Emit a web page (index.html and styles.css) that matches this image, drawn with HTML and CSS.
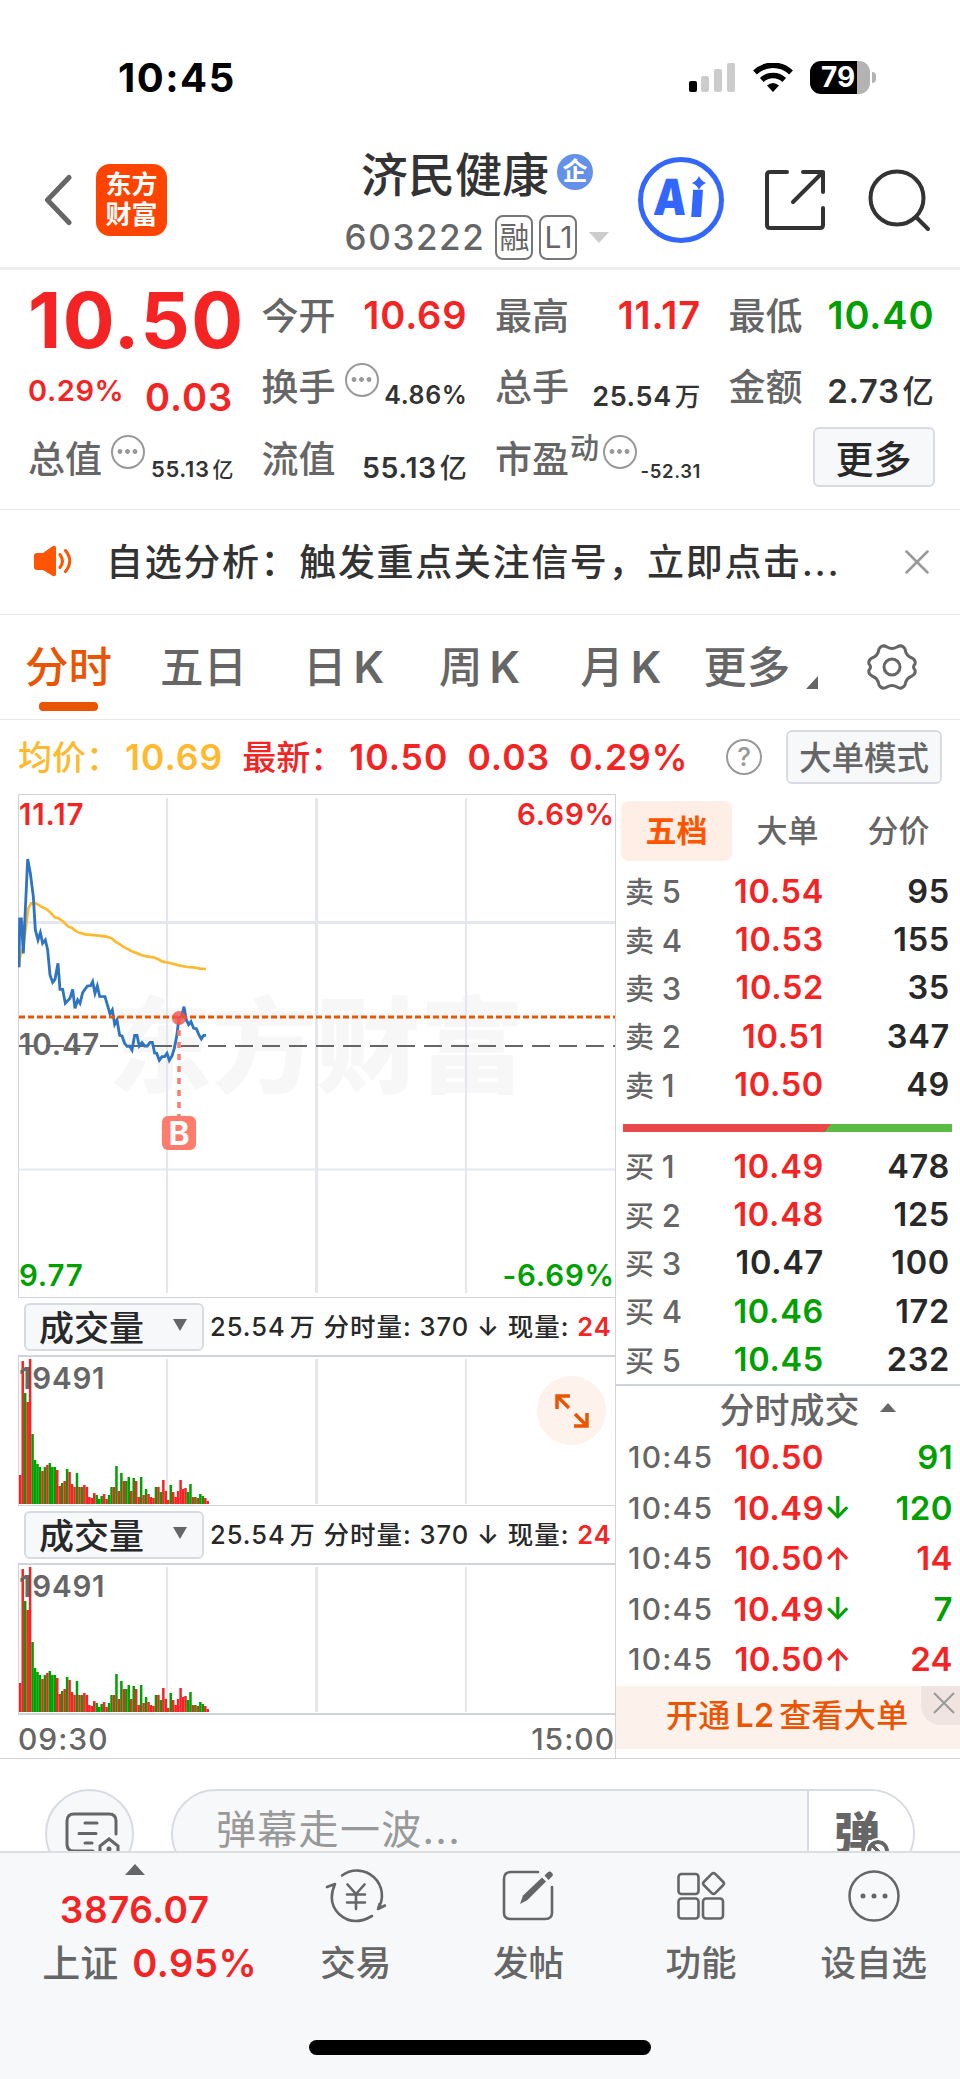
FILE: index.html
```html
<!DOCTYPE html>
<html lang="zh-CN">
<head>
    <meta charset="UTF-8">
    <meta name="viewport" content="width=device-width, initial-scale=1.0">
    <title>济民健康 603222</title>
    <link rel="stylesheet" href="styles.css">
</head>
<body>
    <!-- 状态栏 -->
    <div class="status-bar">
        <span class="clock">10:45</span>
        <div class="status-icons">
            <svg class="signal" width="46" height="30" viewBox="0 0 46 30">
                <rect x="0" y="18" width="8" height="11" rx="2" fill="#000"/>
                <rect x="12" y="13" width="8" height="16" rx="2" fill="#ccc"/>
                <rect x="25" y="6" width="8" height="23" rx="2" fill="#ccc"/>
                <rect x="38" y="0" width="8" height="29" rx="2" fill="#ccc"/>
            </svg>
            <svg class="wifi" width="40" height="30" viewBox="0 0 40 30" fill="none" stroke="#000">
                <path d="M2 9.5 A26 26 0 0 1 38 9.5" stroke-width="5.5"/>
                <path d="M8.8 17 A16.5 16.5 0 0 1 31.200 17" stroke-width="5.5"/>
                <path d="M14 22.500 Q20 17.500 26 22.500 L20 29 Z" fill="#000" stroke="none"/>
            </svg>
            <div class="battery"><span>79</span></div>
            <i class="battery-tip"></i>
        </div>
    </div>

    <!-- 顶部标题 -->
    <header class="top">
        <svg class="back" width="28" height="52" viewBox="0 0 28 52" fill="none" stroke="#666" stroke-width="5" stroke-linecap="round" stroke-linejoin="round">
            <path d="M25 3.500 L3.500 26 L25 48.500"/>
        </svg>
        <div class="logo">东方<br>财富</div>
        <div class="stock">
            <div class="stock-name">济民健康<span class="badge">企</span></div>
            <div class="stock-code"><span class="code">603222</span><span class="tag">融</span><span class="tag">L1</span><i class="caret"></i></div>
        </div>
        <svg class="ai" width="88" height="88" viewBox="0 0 88 88">
            <circle cx="44" cy="44" r="40.500" fill="none" stroke="#36f" stroke-width="5"/>
            <text x="20" y="59" textLength="33" lengthAdjust="spacingAndGlyphs" transform="skewX(-4)">A</text>
            <text x="56" y="61" transform="skewX(-4)">ı</text>
            <path d="M62 20 Q64 25 69 27 Q64 29 62 34 Q60 29 55 27 Q60 25 62 20Z" fill="#36f"/>
        </svg>
        <svg class="share" width="62" height="62" viewBox="0 0 62 62" fill="none" stroke="#333" stroke-width="4" stroke-linecap="round" stroke-linejoin="round">
            <path d="M23 3 H6 Q3 3 3 6 V56 Q3 59 6 59 H56 Q59 59 59 56 V39"/>
            <path d="M39 3 H59 V23 M58 4 L29 33"/>
        </svg>
        <svg class="search" width="64" height="64" viewBox="0 0 64 64" fill="none" stroke="#333" stroke-width="4" stroke-linecap="round">
            <circle cx="30" cy="30" r="26.500"/>
            <path d="M49 49 L61 61"/>
        </svg>
    </header>

    <!-- 行情数据 -->
    <section class="quote">
        <div class="cell"><b class="price red">10.50</b></div>
        <div class="cell"><span>今开</span><em class="n37 red">10.69</em></div>
        <div class="cell"><span>最高</span><em class="n37 red">11.17</em></div>
        <div class="cell"><span>最低</span><em class="n37 green">10.40</em></div>

        <div class="cell change"><em class="n29 red">0.29%</em><em class="n37 low red">0.03</em></div>
        <div class="cell"><span>换手</span><i class="dots"></i><em class="n25">4.86%</em></div>
        <div class="cell"><span>总手</span><em class="n27">25.54<small>万</small></em></div>
        <div class="cell"><span>金额</span><em class="n32">2.73<small>亿</small></em></div>

        <div class="cell"><span>总值</span><i class="dots"></i><em class="n22">55.13<small>亿</small></em></div>
        <div class="cell"><span>流值</span><em class="n28">55.13<small>亿</small></em></div>
        <div class="cell"><span>市盈</span><sup>动</sup><i class="dots tight"></i><em class="n18">-52.31</em></div>
        <div class="cell right"><button class="more">更多</button></div>
    </section>

    <!-- 公告 -->
    <section class="notice">
        <svg width="40" height="34" viewBox="0 0 40 34">
            <path d="M3 8 H9 L19 1 Q22 0 22 3 V29 Q22 32 19 31 L9 25 H3 Q0 25 0 22 V11 Q0 8 3 8Z" fill="#ff5500"/>
            <path d="M26 9.500 Q31 16 26 22.500 M31.500 5.500 Q40 16 31.500 26.500" fill="none" stroke="#ff5500" stroke-width="3" stroke-linecap="round"/>
        </svg>
        <p>自选分析：触发重点关注信号，立即点击...</p>
        <svg class="close" width="24" height="24" viewBox="0 0 24 24" stroke="#999" stroke-width="2.500" stroke-linecap="round">
            <path d="M1.500 1.500 L22.500 22.500 M22.500 1.500 L1.500 22.500"/>
        </svg>
    </section>

    <!-- 周期切换 -->
    <nav class="tabs">
        <a class="active">分时</a>
        <a>五日</a>
        <a>日<span>K</span></a>
        <a>周<span>K</span></a>
        <a>月<span>K</span></a>
        <a class="drop">更多</a>
        <svg class="gear" width="50" height="48" viewBox="0 0 50 48" fill="none" stroke="#666" stroke-width="3" stroke-linejoin="round">
            <path d="M20 4 Q25 7 30 4 Q35 1 38 6 Q39 13 45 15 Q49 17 48 21 Q45 24 48 27 Q49 31 45 33 Q39 35 38 42 Q35 47 30 44 Q25 41 20 44 Q15 47 12 42 Q11 35 5 33 Q1 31 2 27 Q5 24 2 21 Q1 17 5 15 Q11 13 12 6 Q15 1 20 4Z"/>
            <circle cx="25" cy="24" r="8"/>
        </svg>
    </nav>

    <div class="summary">
        <span class="avg">均价：<em>10.69</em></span>
        <span class="last red">最新：<em>10.50</em><em>0.03</em><em>0.29%</em></span>
        <span class="help">?</span>
        <button class="mode">大单模式</button>
    </div>

    <main class="board">
        <!-- 分时图 -->
        <div class="charts">
            <div class="chart">
                <div class="watermark">东方财富</div>
                <svg class="plot" width="597" height="503" viewBox="0 0 597 503">
                    <g stroke="#e4e7ee" stroke-width="2">
                        <path d="M149 4 V499 M448 4 V499 M0 375.500 H597"/>
                        <path d="M298.500 4 V499 M0 128.500 H597" stroke-width="3"/>
                    </g>
                    <path d="M1 252 H597" stroke="#666" stroke-width="2" stroke-dasharray="18 9"/>
                    <!-- 均价线 -->
                    <polyline transform="translate(-18 -4) scale(.3333)" fill="none" stroke="#ffb92e" stroke-width="8" points="57,532 60,500 70,470 78,410 85,355 93,340 108,340 124,350 140,358 152,368 165,382 175,385 188,393 205,410 215,413 230,425 255,433 290,436 320,440 335,445 345,454 375,473 400,486 410,489 425,496 440,499 460,502 473,507 488,515 510,519 540,527 562,531 580,532 600,536 618,537"/>
                    <!-- 价格线 -->
                    <polyline transform="translate(-18 -4) scale(.3333)" fill="none" stroke="#2f74c0" stroke-width="8.500" points="57,532 59,387 64,387 70,490 83,207 91,250 100,320 106,420 114,450 121,428 128,460 136,450 143,480 150,555 158,577 165,568 174,520 180,598 188,598 196,640 210,625 218,598 225,655 233,630 240,640 248,608 262,588 272,587 278,575 285,610 292,588 299,619 315,620 330,672 337,660 344,703 351,690 359,736 366,738 374,760 381,769 389,768 396,780 404,736 411,736 418,768 426,758 434,768 442,768 450,757 457,757 464,789 470,790 478,811 486,800 494,800 501,790 508,811 516,798 523,775 530,740 537,684 545,680 552,650 559,690 566,704 573,695 581,715 589,716 597,735 604,747 611,736 618,736"/>
                    <path d="M1 223 H597" stroke="#ea5504" stroke-width="3" stroke-dasharray="6 3"/>
                    <path d="M161 224 V322" stroke="#ff7b6b" stroke-width="3.500" stroke-dasharray="6 6"/>
                    <circle cx="161" cy="224" r="7" fill="#f0504a" fill-opacity=".8"/>
                </svg>
                <span class="buy-mark">B</span>
                <span class="lbl tl red">11.17</span>
                <span class="lbl tr red">6.69%</span>
                <span class="lbl mid">10.47</span>
                <span class="lbl bl green">9.77</span>
                <span class="lbl br green">-6.69%</span>
            </div>

            <div class="vol-head">
                <button class="pick">成交量<i></i></button>
                <span class="vol-info">25.54<small>万</small> 分时量: 370 ↓ 现量: <b class="red">24</b></span>
            </div>
            <div class="volume">
                <svg class="bars" width="597" height="150" viewBox="0 0 597 150"></svg>
                <span class="lbl vol-max">19491</span>
                <div class="expand">
                    <svg width="36" height="36" viewBox="0 0 36 36" fill="none" stroke="#ea5504" stroke-width="3.500">
                        <path d="M3 16 V3 H16 M3.500 3.500 L15 15 M33 20 V33 H20 M32.500 32.500 L21 21"/>
                    </svg>
                </div>
            </div>

            <div class="vol-head">
                <button class="pick">成交量<i></i></button>
                <span class="vol-info">25.54<small>万</small> 分时量: 370 ↓ 现量: <b class="red">24</b></span>
            </div>
            <div class="volume last-vol">
                <svg class="bars" width="597" height="150" viewBox="0 0 597 150"></svg>
                <span class="lbl vol-max">19491</span>
            </div>
            <div class="times"><span>09:30</span><span>15:00</span></div>
        </div>

        <!-- 五档盘口 -->
        <aside class="side">
            <div class="side-tabs"><a class="on">五档</a><a>大单</a><a>分价</a></div>
            <ul class="book">
                <li><span>卖<i>5</i></span><em class="red">10.54</em><b>95</b></li>
                <li><span>卖<i>4</i></span><em class="red">10.53</em><b>155</b></li>
                <li><span>卖<i>3</i></span><em class="red">10.52</em><b>35</b></li>
                <li><span>卖<i>2</i></span><em class="red">10.51</em><b>347</b></li>
                <li><span>卖<i>1</i></span><em class="red">10.50</em><b>49</b></li>
            </ul>
            <div class="ratio"></div>
            <ul class="book">
                <li><span>买<i>1</i></span><em class="red">10.49</em><b>478</b></li>
                <li><span>买<i>2</i></span><em class="red">10.48</em><b>125</b></li>
                <li><span>买<i>3</i></span><em>10.47</em><b>100</b></li>
                <li><span>买<i>4</i></span><em class="green">10.46</em><b>172</b></li>
                <li><span>买<i>5</i></span><em class="green">10.45</em><b>232</b></li>
            </ul>
            <div class="deal-title">分时成交<i></i></div>
            <ul class="deals">
                <li><span>10:45</span><em class="red">10.50</em><u></u><b class="green">91</b></li>
                <li><span>10:45</span><em class="red">10.49</em><u class="green">↓</u><b class="green">120</b></li>
                <li><span>10:45</span><em class="red">10.50</em><u class="red">↑</u><b class="red">14</b></li>
                <li><span>10:45</span><em class="red">10.49</em><u class="green">↓</u><b class="green">7</b></li>
                <li><span>10:45</span><em class="red">10.50</em><u class="red">↑</u><b class="red">24</b></li>
            </ul>
            <div class="promo">
                开通<span>L2</span>查看大单
                <div class="promo-close">
                    <svg width="22" height="22" viewBox="0 0 22 22" stroke="#999" stroke-width="2"><path d="M1 1 L21 21 M21 1 L1 21"/></svg>
                </div>
            </div>
        </aside>
    </main>

    <!-- 弹幕 -->
    <section class="comment">
        <div class="comment-icon">
            <svg width="56" height="52" viewBox="0 0 56 52" fill="none" stroke="#666" stroke-width="3" stroke-linecap="round">
                <path d="M51 22 V9 Q51 2 44 2 H9 Q2 2 2 9 V32 Q2 39 9 39 H28 M20 11 H32 M14 21.500 H31 M20 31 H27"/>
                <path d="M35 42 V34 L44 27 L53 34 V42" />
                <circle cx="44" cy="37" r="2.500" fill="#666" stroke="none"/>
            </svg>
        </div>
        <div class="comment-box">
            <span class="placeholder">弹幕走一波...</span>
            <div class="toggle">弹<i></i></div>
        </div>
    </section>

    <!-- 底部导航 -->
    <footer class="bottom">
        <div class="index">
            <i></i>
            <em class="red">3876.07</em>
            <p>上证<em class="red">0.95%</em></p>
        </div>
        <a>
            <svg width="62" height="56" viewBox="0 0 62 56" fill="none" stroke="#666" stroke-width="2.600" stroke-linecap="round" stroke-linejoin="round">
                <path d="M17 7.500 A25 25 0 0 1 53 41 L60 37.500 M53 41 L54.500 36"/>
                <path d="M2 19 L10 16 Q2 34 14 46 Q28 59 47 48"/>
                <path d="M22.500 16.500 L31 26 L39.500 16.500 M31 26 V41 M22 26.500 H40 M22 34.500 H40"/>
            </svg>
            交易
        </a>
        <a>
            <svg width="54" height="56" viewBox="0 0 54 56" fill="none" stroke="#666" stroke-width="2.600" stroke-linecap="round">
                <path d="M37 4 H10 Q3 4 3 11 V45 Q3 51 10 51 H44 Q51 51 51 45 V19"/>
                <path d="M19 36 L22 27.500 L41 9.500 L45 13.500 L26.500 32 Z M43.500 7.500 L46.500 4.500 Q49 2.500 51 5 Q53 7 50.500 9 L47.500 12Z" fill="#666" stroke="none"/>
            </svg>
            发帖
        </a>
        <a>
            <svg width="50" height="56" viewBox="0 0 50 56" fill="none" stroke="#666" stroke-width="2.600">
                <rect x="2.500" y="6" width="20" height="20" rx="3"/>
                <rect x="2.500" y="30.500" width="20" height="20" rx="3"/>
                <rect x="27" y="30.500" width="20" height="20" rx="3"/>
                <rect x="29.500" y="7.500" width="16" height="16" rx="2.500" transform="rotate(45 37.500 15.500)"/>
            </svg>
            功能
        </a>
        <a>
            <svg width="54" height="56" viewBox="0 0 54 56" fill="#666">
                <circle cx="27" cy="28" r="24.500" fill="none" stroke="#666" stroke-width="2.500"/>
                <circle cx="16" cy="28" r="2.500"/><circle cx="27" cy="28" r="2.500"/><circle cx="38" cy="28" r="2.500"/>
            </svg>
            设自选
        </a>
        <div class="home-bar"></div>
    </footer>

    <script>
        // 每分钟成交量，r 红 g 绿
        const volumes = "r29 r143 g111 r102 r145 g70 g44 g40 g37 r33 g37 r39 g41 g37 g37 r34 r18 g21 r23 g35 r32 r20 r17 g31 r17 g17 r19 r17 r7 r6 r11 g9 g5 g8 r10 r5 g9 g17 r17 g38 r13 g31 r23 g23 g27 r13 g26 r23 r7 g27 r9 g15 r10 r7 r6 g17 r17 g12 r24 r13 r4 g19 r12 r7 r13 r24 r15 r16 g12 g20 r7 g7 r6 g10 g8 r6 r3".split(" ");

        document.querySelectorAll(".bars").forEach(svg => {
            let out = '<path d="M149 3 V148 M448 3 V148" stroke="#e4e7ee" stroke-width="2"/><path d="M298.500 3 V148" stroke="#e4e7ee" stroke-width="3"/>';
            volumes.forEach((v, i) => {
                const h = Number(v.slice(1));
                const x = 1 + i * 2.467;
                out += `<rect x="${x}" y="${148 - h}" width="2.5" height="${h}" fill="${v[0] === "r" ? "#f42424" : "#00a000"}"/>`;
            });
            svg.innerHTML = out;
        });
    </script>
</body>
</html>
```
FILE: styles.css
```css
* {
    box-sizing: border-box;
    margin: 0;
    padding: 0;
}

body {
    width: 960px;
    height: 2079px;
    overflow: hidden;
    background: #fff;
    color: #282828;
    font-family: Inter, "Noto Sans CJK SC", sans-serif;
    font-weight: 500;
}

em, i, u {
    font-style: normal;
    text-decoration: none;
}

em {
    font-weight: 600;
}

ul {
    list-style: none;
}

svg {
    display: block;
    flex: none;
}

button {
    font-family: inherit;
    font-weight: 500;
    background: #f7f8fa;
    border: 2px solid #d8dce2;
    border-radius: 6px;
}

.red { color: #f42424; }
.green { color: #00a000; }

/* 状态栏 */
.status-bar {
    height: 130px;
    padding: 61px 84px 0 118px;
    display: flex;
    justify-content: space-between;
    align-items: flex-start;
}

.clock {
    font-size: 40px;
    font-weight: 700;
    line-height: 34px;
    letter-spacing: 1.5px;
    color: #000;
}

.status-icons {
    display: flex;
    align-items: center;
    height: 33px;
}

.wifi {
    margin: 0 17px 0 18px;
}

.battery {
    width: 60px;
    height: 33px;
    border-radius: 11px;
    background: linear-gradient(to right, #000 47px, #b3b3b3 47px);
    color: #fff;
    font-size: 28px;
    font-weight: 700;
    line-height: 33px;
    padding-left: 11px;
}

.battery-tip {
    width: 4px;
    height: 11px;
    margin-left: 2px;
    border-radius: 0 6px 6px 0;
    background: #b3b3b3;
}

/* 顶部标题 */
.top {
    height: 140px;
    padding: 2px 0 0 44px;
    display: flex;
    align-items: center;
    border-bottom: 3px solid #ededed;
}

.logo {
    width: 71px;
    height: 72px;
    margin-left: 24px;
    padding-top: 6px;
    border-radius: 14px;
    background: #ff4400;
    color: #fff;
    font-size: 26px;
    font-weight: 700;
    line-height: 30px;
    text-align: center;
}

.stock {
    width: 300px;
    height: 117px;
    margin-left: 160px;
}

.stock-name {
    height: 61px;
    display: flex;
    align-items: center;
    justify-content: center;
    font-size: 47px;
    color: #333;
}

.badge {
    width: 36px;
    height: 36px;
    margin-left: 8px;
    border-radius: 50%;
    background: #6390e8;
    color: #fff;
    font-size: 25px;
    font-weight: 700;
    line-height: 35px;
    text-align: center;
}

.stock-code {
    height: 60px;
    margin-top: 5px;
    display: flex;
    align-items: center;
    justify-content: center;
    color: #666;
}

.code {
    font-size: 35px;
    letter-spacing: 1.600px;
}

.tag {
    height: 45px;
    min-width: 38px;
    margin-left: 6px;
    padding: 0 3px;
    border: 2px solid #777;
    border-radius: 8px;
    font-size: 30px;
    font-weight: 400;
    line-height: 41px;
    text-align: center;
}

.code + .tag {
    margin-left: 10px;
    padding: 0 2px;
}

.caret {
    margin-left: 12px;
    border: 10px solid transparent;
    border-top: 11px solid #ccc;
    border-bottom: 0;
}

.ai {
    margin-left: 10px;
}

.ai text {
    fill: #36f;
    font-size: 50px;
    font-weight: 900;
}

.share {
    margin-left: 39px;
}

.search {
    margin-left: 41px;
}

/* 行情数据 */
.quote {
    height: 240px;
    padding: 9px 26px 0 28px;
    display: grid;
    grid-template-columns: repeat(4, 206px);
    grid-auto-rows: 71.500px;
    column-gap: 27.500px;
    border-bottom: 1px solid #e8e8e8;
}

.cell {
    display: flex;
    align-items: center;
    white-space: nowrap;
    font-size: 37px;
    color: #666;
}

.cell > span {
    margin-top: -2px;
}

.cell em {
    margin-left: auto;
    color: #333;
    letter-spacing: .6px;
}

.cell em.red { color: #f42424; }
.cell em.green { color: #00a000; }

.cell .price {
    margin-top: 11px;
    font-size: 77px;
    font-weight: 700;
    letter-spacing: 1.500px;
}

.cell small {
    font-size: 95%;
    font-weight: 500;
    margin-left: 3px;
}

.cell .n37 { font-size: 38px; letter-spacing: .9px; padding-top: 1px; }
.n32 { font-size: 33px; padding-top: 7px; }
.n29 { font-size: 29px; }
.n28 { font-size: 28.500px; padding-top: 17px; }
.n27 { font-size: 27px; padding-top: 16px; }
.n25 { font-size: 25px; padding-top: 17px; }
.n22 { font-size: 22px; padding-top: 21px; }
.n18 { font-size: 18.500px; padding-top: 26px; }

.cell.change em:first-child { margin-left: 0; padding-top: 8px; }
.cell.change .low { padding-top: 22px; margin-right: 1px; }
.cell.right { justify-content: flex-end; }

.cell sup {
    align-self: flex-start;
    font-size: 29px;
    line-height: 30px;
    margin-left: 1px;
    margin-top: 12px;
}

.dots {
    width: 34px;
    height: 34px;
    margin: -12px 0 0 9px;
    border: 2.500px solid #999;
    border-radius: 50%;
    background:
        radial-gradient(circle at 7px 14.500px, #999 2px, transparent 2.800px),
        radial-gradient(circle at 14.500px 14.500px, #999 2px, transparent 2.800px),
        radial-gradient(circle at 22px 14.500px, #999 2px, transparent 2.800px);
}

.dots.tight {
    margin-left: 4px;
}

.more {
    width: 122px;
    height: 60px;
    padding-bottom: 5px;
    margin-top: -2px;
    font-size: 38px;
    color: #282828;
}

/* 公告 */
.notice {
    height: 105px;
    padding: 0 31px 0 34px;
    display: flex;
    align-items: center;
    border-bottom: 1px solid #e8e8e8;
}

.notice p {
    flex: 1;
    margin: -4px 0 0 32px;
    font-size: 37px;
    letter-spacing: 1.650px;
    color: #333;
}

/* 周期切换 */
.tabs {
    height: 105px;
    padding: 0 43px 0 25px;
    display: flex;
    align-items: center;
    border-bottom: 1px solid #e8e8e8;
    font-size: 43.500px;
    color: #666;
}

.tabs a {
    position: relative;
    margin-top: -5px;
    white-space: nowrap;
}

.tabs a span {
    margin-left: 7px;
    font-weight: 600;
}

.tabs a:nth-child(2) { margin-left: 48px; }
.tabs a:nth-child(3) { margin-left: 56px; }
.tabs a:nth-child(4) { margin-left: 55px; }
.tabs a:nth-child(5) { margin-left: 60px; }
.tabs a:nth-child(6) { margin-left: 42px; }

.tabs .active {
    color: #ea5504;
}

.tabs .active::after {
    content: "";
    position: absolute;
    left: 14px;
    bottom: -15px;
    width: 59px;
    height: 9px;
    border-radius: 4px;
    background: #ea5504;
}

.tabs .drop::after {
    content: "";
    position: absolute;
    right: -28px;
    bottom: 7px;
    border-left: 12px solid transparent;
    border-bottom: 13px solid #666;
}

.gear {
    margin-left: auto;
}

/* 均价 */
.summary {
    height: 74px;
    padding: 0 18px;
    display: flex;
    align-items: center;
    font-size: 34px;
    white-space: nowrap;
}

.summary em {
    font-size: 35.500px;
    letter-spacing: 1px;
}

.avg, .last { margin-top: -3px; }
.avg { color: #ffb92e; }
.avg em { margin-left: 5px; }
.last { margin-left: 19px; }
.last em { margin-left: 5px; }
.last em + em { margin-left: 19px; }

.help {
    width: 36px;
    height: 36px;
    margin-left: auto;
    border: 2px solid #999;
    border-radius: 50%;
    color: #999;
    font-size: 26px;
    line-height: 32px;
    text-align: center;
}

.mode {
    width: 156px;
    height: 54px;
    margin-left: 24px;
    padding-bottom: 3px;
    font-size: 32.500px;
    color: #666;
}

/* 图表与盘口 */
.board {
    height: 965px;
    display: flex;
    border-bottom: 1px solid #d0d4da;
}

.charts {
    width: 598px;
    margin-left: 18px;
    border-top: 1px solid #d0d4da;
    border-right: 1px solid #d0d4da;
}

.chart {
    position: relative;
    height: 503px;
    border-left: 1px solid #d0d4da;
    border-bottom: 1px solid #d0d4da;
}

.plot {
    position: relative;
    margin-left: -1px;
    top: -1px;
}

.watermark {
    position: absolute;
    left: 89px;
    top: 177px;
    font-size: 104px;
    font-weight: 900;
    line-height: 150px;
    color: #f7f7f7;
}

.lbl {
    position: absolute;
    font-size: 29.500px;
    font-weight: 600;
    line-height: 30px;
    letter-spacing: .8px;
}

.tl { left: 0; top: 4px; }
.tr { right: 0; top: 4px; }
.mid { left: 0; top: 234px; color: #666; }
.bl { left: 0; bottom: 7px; }
.br { right: 0; bottom: 7px; }

.buy-mark {
    position: absolute;
    left: 143px;
    top: 321px;
    width: 34px;
    height: 34px;
    border-radius: 6px;
    background: #ff7b6b;
    color: #fff;
    font-size: 32px;
    font-weight: 700;
    line-height: 35px;
    text-align: center;
}

.vol-head {
    height: 59px;
    display: flex;
    align-items: center;
    border-bottom: 2px solid #d0d4da;
    white-space: nowrap;
}

.pick {
    width: 180px;
    height: 48px;
    margin-left: 6px;
    padding: 0 15px 3px 13px;
    display: flex;
    align-items: center;
    justify-content: space-between;
    font-size: 35px;
    color: #282828;
}

.pick i {
    border: 7px solid transparent;
    border-top: 12px solid #666;
    border-bottom: 0;
}

.vol-info {
    margin: -4px 0 0 6px;
    font-size: 25.500px;
    letter-spacing: 1px;
}

.vol-info small {
    font-size: 25px;
    margin-left: 4px;
}

.vol-info b {
    font-weight: 600;
}

.volume {
    position: relative;
    height: 150px;
    border-left: 1px solid #d0d4da;
    border-bottom: 1px solid #d0d4da;
}

.volume .bars {
    margin: -1px 0 0 -1px;
}

.last-vol {
    height: 151px;
    border-bottom-width: 2px;
}

.vol-max {
    left: 0;
    top: 7px;
    color: #666;
}

.expand {
    position: absolute;
    right: 9px;
    top: 20px;
    width: 69px;
    height: 69px;
    display: flex;
    align-items: center;
    justify-content: center;
    border-radius: 50%;
    background: #fdf2ec;
}

.times {
    display: flex;
    justify-content: space-between;
    font-size: 30px;
    line-height: 48px;
    letter-spacing: 1px;
    color: #666;
}

/* 五档 */
.side {
    width: 344px;
}

.side-tabs {
    height: 60px;
    margin: 7px 0 6px 5px;
    display: flex;
    font-size: 31px;
    line-height: 59px;
    text-align: center;
    color: #666;
}

.side-tabs a {
    width: 111px;
}

.side-tabs .on {
    border-radius: 8px;
    background: #ffeee5;
    color: #ff5500;
    font-weight: 700;
}

.book li {
    height: 48.400px;
    padding: 0 10px 0 9px;
    display: grid;
    grid-template-columns: 70px 129px 1fr;
    align-items: center;
    font-size: 32.500px;
    letter-spacing: .7px;
    text-align: right;
}

.book span {
    padding-bottom: 2px;
    text-align: left;
    font-size: 29px;
    color: #666;
}

.book span i {
    font-size: 31px;
    margin-left: 7px;
}

.book b, .deals b {
    font-weight: 600;
}

.ratio {
    height: 8px;
    margin: 15px 8px 10px 7px;
    background: linear-gradient(130deg, #ea4748 62%, #5bb945 62%);
}

.deal-title {
    height: 48px;
    display: flex;
    align-items: center;
    justify-content: center;
    padding: 0 0 3px 39px;
    border-top: 2px solid #d0d4da;
    font-size: 35px;
    color: #666;
}

.deal-title i {
    margin-left: 20px;
    border: 8px solid transparent;
    border-bottom: 9px solid #666;
    border-top: 0;
}

.deals li {
    height: 50.500px;
    padding: 0 7px 0 12px;
    display: grid;
    grid-template-columns: 85px 111px 20px 1fr;
    align-items: center;
    font-size: 33px;
    letter-spacing: .4px;
    text-align: right;
}

.deals u {
    font-size: 31px;
    font-weight: 600;
}

.deals span {
    text-align: left;
    font-size: 30px;
    letter-spacing: 1.200px;
    color: #666;
}

.promo {
    position: relative;
    height: 63px;
    margin-top: 2px;
    padding-left: 50px;
    background: #fdf1eb;
    color: #ea5504;
    font-size: 32px;
    line-height: 59px;
    letter-spacing: .3px;
}

.promo span {
    margin: 0 5px;
    font-weight: 600;
}

.promo-close {
    position: absolute;
    right: 0;
    top: 0;
    width: 39px;
    height: 39px;
    padding: 6px 0 0 12px;
    border-bottom-left-radius: 20px;
    background: #efe4df;
}

/* 弹幕 */
.comment {
    height: 92px;
    padding: 30px 45px 0;
    display: flex;
    overflow: hidden;
}

.comment-icon {
    width: 89px;
    height: 89px;
    padding: 21px 0 0 18px;
    border: 2px solid #d8dce2;
    border-radius: 50%;
    background: #f7f8fa;
}

.comment-box {
    width: 744px;
    height: 89px;
    margin-left: 37px;
    display: flex;
    border: 2px solid #d8dce2;
    border-radius: 45px;
    background: #f7f8fa;
    overflow: hidden;
}

.placeholder {
    flex: 1;
    padding-left: 43px;
    font-size: 40px;
    font-weight: 400;
    line-height: 78px;
    letter-spacing: 1.300px;
    color: #999;
}

.toggle {
    position: relative;
    width: 106px;
    padding-left: 25px;
    border-left: 2px solid #d8dce2;
    background: #fff;
    font-size: 46px;
    font-weight: 900;
    line-height: 84px;
    color: #666;
}

.toggle i {
    position: absolute;
    left: 58px;
    top: 49px;
    width: 22px;
    height: 22px;
    border: 4px solid #666;
    border-radius: 50%;
    background: linear-gradient(45deg, #fff 40%, #666 40%, #666 60%, #fff 60%);
    outline: 2px solid #fff;
}

/* 底部导航 */
.bottom {
    position: relative;
    height: 228px;
    padding-top: 11px;
    display: flex;
    align-items: flex-start;
    border-top: 2px solid #dcdee2;
    background: #f7f8fa;
    font-size: 35.500px;
    color: #666;
}

.index {
    width: 270px;
    display: flex;
    flex-direction: column;
    align-items: center;
}

.index i {
    border: 10px solid transparent;
    border-bottom: 11px solid #666;
    border-top: 0;
}

.index > em {
    margin-top: 10px;
    font-size: 37px;
    line-height: 50px;
    letter-spacing: .5px;
}

.index p {
    margin-top: 2px;
    padding-left: 30px;
    font-size: 38px;
    line-height: 52px;
    white-space: nowrap;
}

.index p em {
    margin-left: 14px;
    letter-spacing: .6px;
}

.bottom a {
    width: 173px;
    display: flex;
    flex-direction: column;
    align-items: center;
    line-height: 50px;
    gap: 15px;
    margin-top: 4px;
}

.home-bar {
    position: absolute;
    left: 309px;
    bottom: 24px;
    width: 342px;
    height: 15px;
    border-radius: 8px;
    background: #000;
}
```
